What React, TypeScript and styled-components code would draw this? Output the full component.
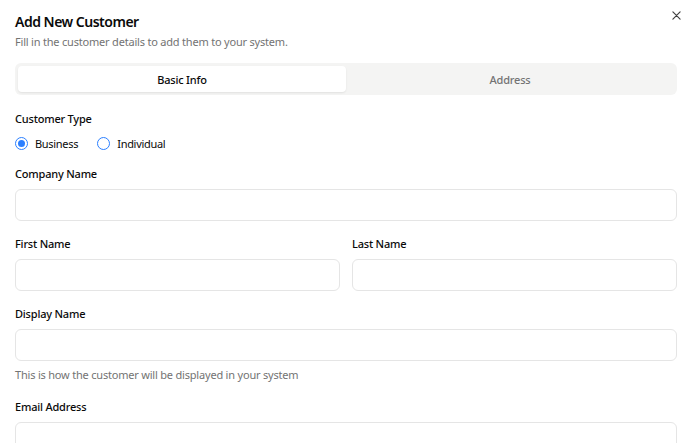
import { useState } from "react";
import styled, { createGlobalStyle } from "styled-components";

const GlobalStyle = createGlobalStyle`
    html, body {
        margin: 0;
        padding: 0;
        height: 100%;
        background: #ffffff;
    }
    body {
        font-family: "Noto Sans", "Open Sans", Arial, sans-serif;
        color: #0a0a0a;
        letter-spacing: -0.2px;
    }
    * {
        box-sizing: border-box;
    }
`;

const Dialog = styled.div`
    position: relative;
    height: 100vh;
    overflow-y: auto;
    background: #ffffff;

    &::-webkit-scrollbar {
        width: 4px;
    }
    &::-webkit-scrollbar-track {
        background: #ffffff;
    }
    &::-webkit-scrollbar-thumb {
        background: #8f8f8f;
        border-radius: 2px;
    }
`;

const Content = styled.div`
    padding: 12px 23px 24px 15px;
`;

const Header = styled.div`
    display: flex;
    flex-direction: column;
    gap: 2px;
    margin-bottom: 13px;
`;

const Title = styled.h2`
    margin: 0;
    font-size: 14px;
    font-weight: 600;
    line-height: 20px;
    letter-spacing: -0.5px;
`;

const Subtitle = styled.p`
    margin: 0;
    font-size: 11px;
    line-height: 16px;
    color: #737373;
`;

const CloseButton = styled.button`
    position: absolute;
    top: 8px;
    right: 17px;
    width: 14px;
    height: 14px;
    padding: 0;
    border: none;
    background: none;
    color: #404040;
    display: flex;
    align-items: center;
    justify-content: center;
    cursor: pointer;
`;

const TabList = styled.div`
    display: grid;
    grid-template-columns: 1fr 1fr;
    padding: 3px;
    background: #f4f4f3;
    border-radius: 6px;
    height: 32px;
    margin-bottom: 16px;
`;

const Tab = styled.button<{ $active?: boolean }>`
    border: none;
    border-radius: 4px;
    font-family: inherit;
    font-size: 11px;
    font-weight: 500;
    letter-spacing: -0.2px;
    background: ${(p) => (p.$active ? "#ffffff" : "transparent")};
    color: ${(p) => (p.$active ? "#0a0a0a" : "#737373")};
    box-shadow: ${(p) => (p.$active ? "0 1px 2px rgba(0,0,0,0.08)" : "none")};
    cursor: pointer;
`;

const Form = styled.div`
    display: flex;
    flex-direction: column;
    gap: 15px;
`;

const Field = styled.div`
    display: flex;
    flex-direction: column;
    gap: 7px;
    min-width: 0;
`;

const Row = styled.div`
    display: grid;
    grid-template-columns: 1fr 1fr;
    gap: 12px;
`;

const Label = styled.label`
    font-size: 11px;
    font-weight: 500;
    line-height: 16px;
    color: #0a0a0a;
`;

const Input = styled.input`
    height: 32px;
    width: 100%;
    border: 1px solid #e5e5e5;
    border-radius: 6px;
    padding: 0 10px;
    font-family: inherit;
    font-size: 12px;
    background: #ffffff;
    outline: none;
`;

const Hint = styled.p`
    margin: 0 0 2px;
    font-size: 11px;
    line-height: 14px;
    color: #737373;
`;

const RadioGroup = styled.div`
    display: flex;
    align-items: center;
    gap: 19px;
    height: 17px;
    margin-top: 1px;
    margin-bottom: -1px;
`;

const RadioOption = styled.label`
    display: flex;
    align-items: center;
    gap: 7px;
    font-size: 11px;
    letter-spacing: -0.3px;
    color: #0a0a0a;
    cursor: pointer;
`;

const RadioCircle = styled.span<{ $checked?: boolean }>`
    width: 13px;
    height: 13px;
    border-radius: 50%;
    border: 1.5px solid #2b7fff;
    display: flex;
    align-items: center;
    justify-content: center;

    &::after {
        content: "";
        width: 7px;
        height: 7px;
        border-radius: 50%;
        background: #2b7fff;
        display: ${(p) => (p.$checked ? "block" : "none")};
    }
`;

export default function App() {
    const [tab, setTab] = useState("basic");
    const [type, setType] = useState("business");

    return (
        <>
            <GlobalStyle />
            <Dialog>
                <CloseButton aria-label="Close">
                    <svg width="9" height="9" viewBox="0 0 10 10" fill="none" stroke="currentColor" strokeWidth="1.3" strokeLinecap="round">
                        <path d="M1 1 L9 9 M9 1 L1 9" />
                    </svg>
                </CloseButton>
                <Content>
                    <Header>
                        <Title>Add New Customer</Title>
                        <Subtitle>Fill in the customer details to add them to your system.</Subtitle>
                    </Header>

                    <TabList>
                        <Tab $active={tab === "basic"} onClick={() => setTab("basic")}>Basic Info</Tab>
                        <Tab $active={tab === "address"} onClick={() => setTab("address")}>Address</Tab>
                    </TabList>

                    <Form>
                        <Field>
                            <Label>Customer Type</Label>
                            <RadioGroup>
                                <RadioOption onClick={() => setType("business")}>
                                    <RadioCircle $checked={type === "business"} />
                                    Business
                                </RadioOption>
                                <RadioOption onClick={() => setType("individual")}>
                                    <RadioCircle $checked={type === "individual"} />
                                    Individual
                                </RadioOption>
                            </RadioGroup>
                        </Field>

                        <Field>
                            <Label>Company Name</Label>
                            <Input />
                        </Field>

                        <Row>
                            <Field>
                                <Label>First Name</Label>
                                <Input />
                            </Field>
                            <Field>
                                <Label>Last Name</Label>
                                <Input />
                            </Field>
                        </Row>

                        <Field>
                            <Label>Display Name</Label>
                            <Input />
                            <Hint>This is how the customer will be displayed in your system</Hint>
                        </Field>

                        <Field>
                            <Label>Email Address</Label>
                            <Input type="email" />
                        </Field>
                    </Form>
                </Content>
            </Dialog>
        </>
    );
}
